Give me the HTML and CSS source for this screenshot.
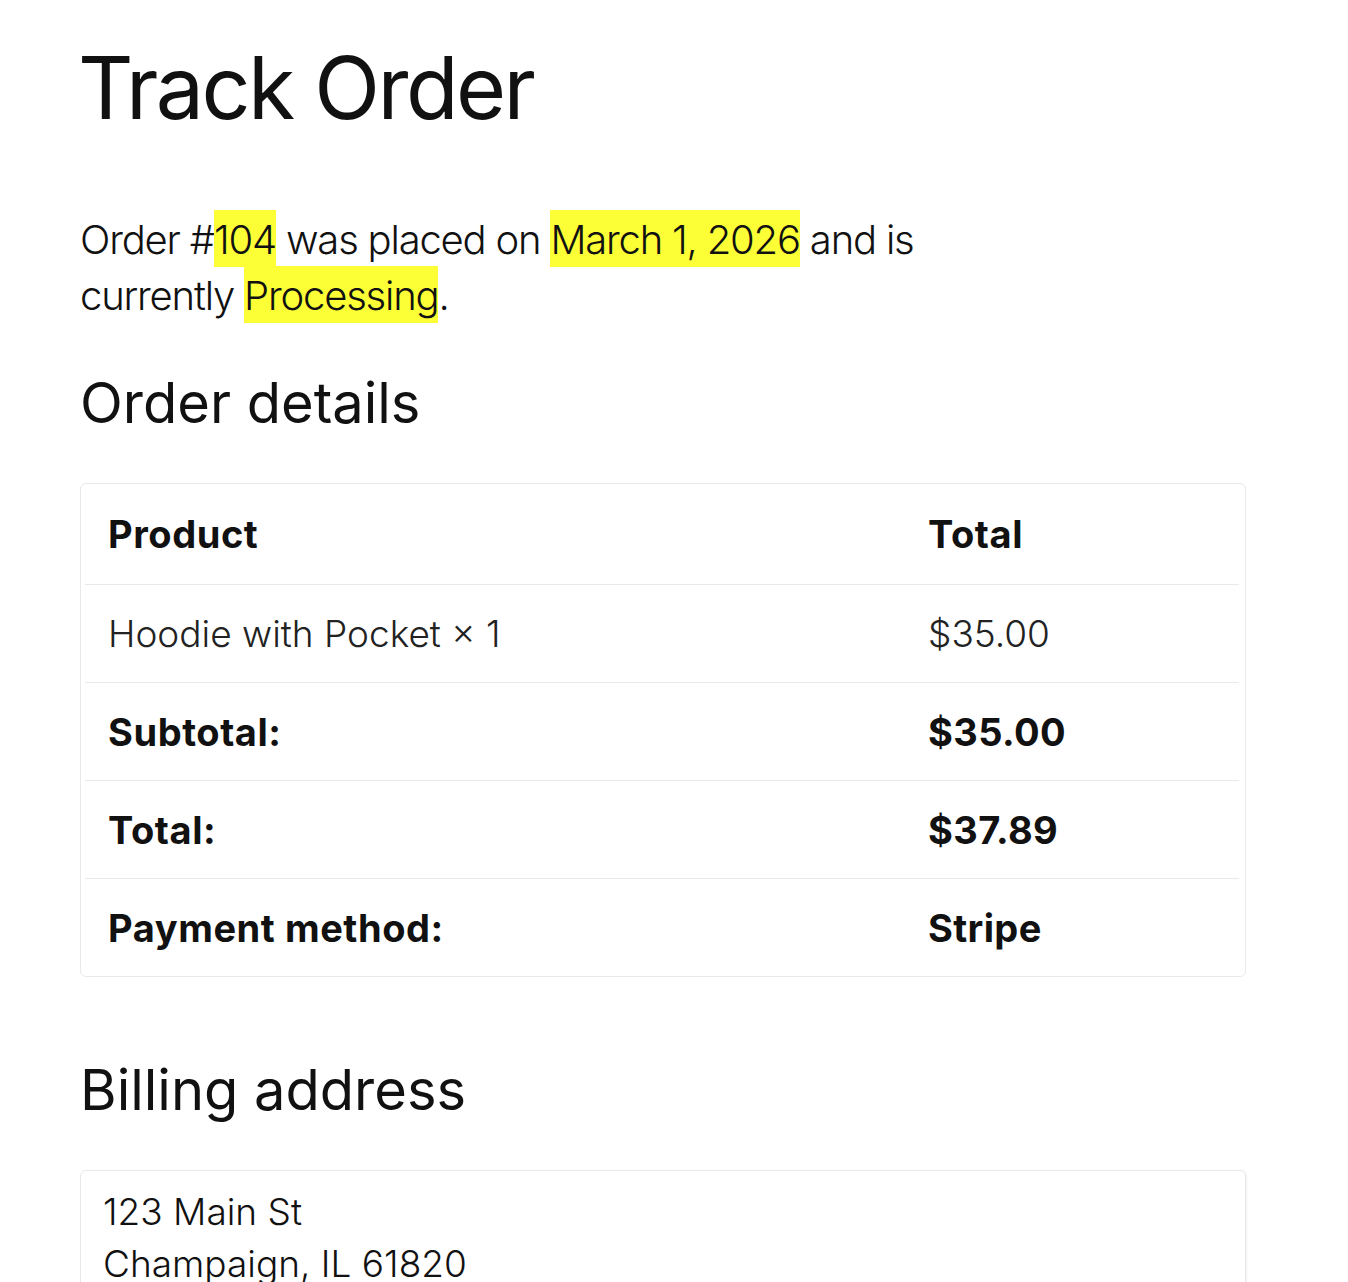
FILE: index.html
```html
<!DOCTYPE html>
<html lang="en">
<head>
    <meta charset="UTF-8">
    <meta name="viewport" content="width=device-width, initial-scale=1.0">
    <title>Track Order</title>
    <link rel="stylesheet" href="styles.css">
</head>
<body>

    <!-- Main Content -->
    <div class="page">
        <h1 class="page-title">Track Order</h1>

        <p class="order-status">
            Order #<mark>104</mark> was placed on <mark>March 1, 2026</mark> and is
            currently <mark>Processing</mark>.
        </p>

        <!-- Order Details -->
        <h2 class="section-title">Order details</h2>
        <div class="order-box">
            <table class="order-table">
                <thead>
                    <tr>
                        <th class="col-product">Product</th>
                        <th>Total</th>
                    </tr>
                </thead>
                <tbody>
                    <tr>
                        <td>Hoodie with Pocket × 1</td>
                        <td>$35.00</td>
                    </tr>
                    <tr class="strong-row">
                        <th>Subtotal:</th>
                        <td>$35.00</td>
                    </tr>
                    <tr class="strong-row">
                        <th>Total:</th>
                        <td>$37.89</td>
                    </tr>
                    <tr class="strong-row">
                        <th>Payment method:</th>
                        <td>Stripe</td>
                    </tr>
                </tbody>
            </table>
        </div>

        <!-- Billing Address -->
        <h2 class="section-title billing-title">Billing address</h2>
        <div class="address-box">
            <p>123 Main St<br>Champaign, IL 61820</p>
        </div>
    </div>

</body>
</html>
```

FILE: styles.css
```css
body {
    font-family: Inter, "Open Sans", sans-serif;
    color: #111;
    background-color: #fff;
    margin: 0;
    padding: 0;
}

.page {
    width: 1166px;
    margin-left: 80px;
    padding-top: 45px;
}

/* Headings */
.page-title {
    font-size: 86px;
    font-weight: 400;
    line-height: 86px;
    letter-spacing: -0.03em;
    margin: 0 0 81px -2px;
}

.section-title {
    font-size: 56px;
    font-weight: 400;
    line-height: 67px;
    letter-spacing: 0;
    margin: 0 0 46px 0;
}

.billing-title {
    margin-top: 80px;
}

/* Status line */
.order-status {
    font-size: 40px;
    font-weight: 300;
    line-height: 56px;
    letter-spacing: -0.03em;
    margin: 0 0 46px 0;
    max-width: 860px;
}

.order-status mark {
    background-color: #fdff36;
    color: #111;
    padding: 5px 0 3px;
}

/* Order table */
.order-box {
    border: 1px solid #e9e9e9;
    border-radius: 6px;
    padding: 0 6px 0 4px;
}

.order-table {
    width: 100%;
    border-collapse: collapse;
}

.order-table th,
.order-table td {
    text-align: left;
    height: 97px;
    padding: 0 23px;
    border-top: 1px solid #e9e9e9;
}

.order-table thead th {
    border-top: none;
    height: 100px;
}

.order-table th {
    font-size: 38px;
    font-weight: 700;
    letter-spacing: 0.015em;
}

.order-table td {
    font-size: 37px;
    font-weight: 300;
    letter-spacing: 0;
    color: #222;
}

.order-table .strong-row td {
    font-size: 38px;
    font-weight: 700;
    letter-spacing: 0.01em;
    color: #111;
}

.col-product {
    width: 774px;
}

/* Address */
.address-box {
    border: 1px solid #e9e9e9;
    border-radius: 6px;
    padding: 15px 22px 20px;
    box-shadow: 1px 0 2px rgba(0, 0, 0, 0.06);
}

.address-box p {
    font-size: 37px;
    line-height: 52px;
    letter-spacing: 0;
    font-weight: 300;
    margin: 0;
}
```
